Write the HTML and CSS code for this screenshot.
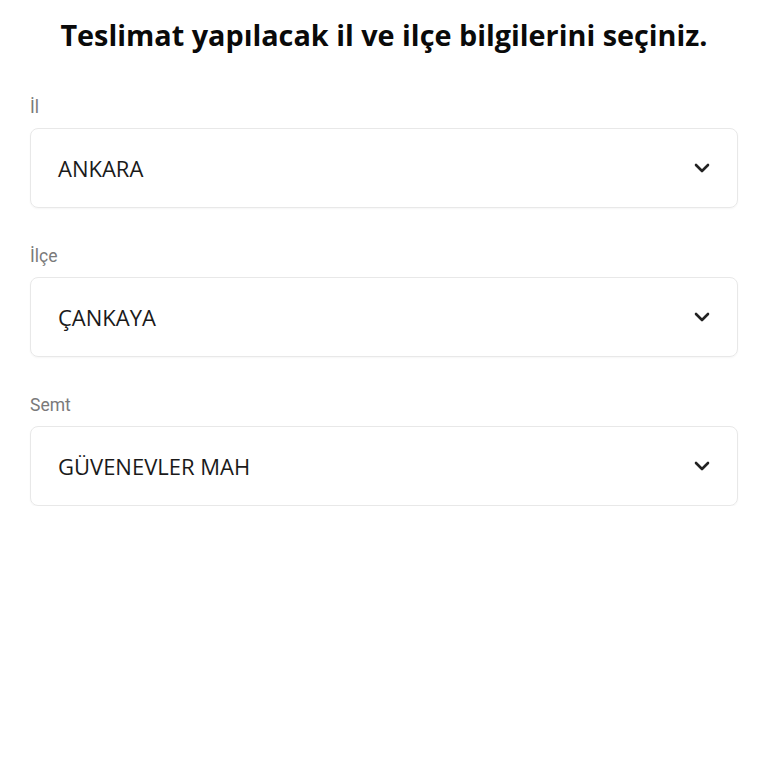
FILE: index.html
```html
<!DOCTYPE html>
<html lang="tr">
<head>
<meta charset="utf-8">
<link rel="stylesheet" href="styles.css">
</head>
<body>
<main class="page">
  <h1 class="title">Teslimat yapılacak il ve ilçe bilgilerini seçiniz.</h1>
  <div class="field">
    <div class="label">İl</div>
    <div class="select"><span class="value">ANKARA</span><svg class="chev" viewBox="0 0 16 10" width="16" height="10"><path d="M2 2 L8 8 L14 2" fill="none" stroke="#222" stroke-width="2.6" stroke-linecap="round" stroke-linejoin="round"/></svg></div>
  </div>
  <div class="field">
    <div class="label">İlçe</div>
    <div class="select"><span class="value">ÇANKAYA</span><svg class="chev" viewBox="0 0 16 10" width="16" height="10"><path d="M2 2 L8 8 L14 2" fill="none" stroke="#222" stroke-width="2.6" stroke-linecap="round" stroke-linejoin="round"/></svg></div>
  </div>
  <div class="field">
    <div class="label">Semt</div>
    <div class="select"><span class="value">GÜVENEVLER MAH</span><svg class="chev" viewBox="0 0 16 10" width="16" height="10"><path d="M2 2 L8 8 L14 2" fill="none" stroke="#222" stroke-width="2.6" stroke-linecap="round" stroke-linejoin="round"/></svg></div>
  </div>
</main>
</body>
</html>
```
FILE: styles.css
```css
html, body { margin: 0; padding: 0; background: #fff; }
body { font-family: "Open Sans", "Noto Sans", sans-serif; color: #111; }
.page { padding: 15px 30px 0 30px; display: flex; flex-direction: column; gap: 37px; }
.title { margin: 0 0 4px 0; text-align: center; font-family: "Open Sans", sans-serif; font-weight: 700; font-size: 28.8px; line-height: 40px; color: #0a0a0a; letter-spacing: 0; }
.field { display: flex; flex-direction: column; gap: 10px; }
.label { font-family: Roboto, sans-serif; font-size: 17.5px; line-height: 22px; color: #7a7a7a; }
.select { height: 80px; box-sizing: border-box; border: 1.5px solid #e8e8e8; border-radius: 8px; display: flex; align-items: center; justify-content: space-between; padding: 0 27px 0 27px; box-shadow: 0 1px 2px rgba(0,0,0,0.04); }
.value { font-size: 22px; color: #1a1a1a; letter-spacing: 0; }
.chev { display: block; }
```
